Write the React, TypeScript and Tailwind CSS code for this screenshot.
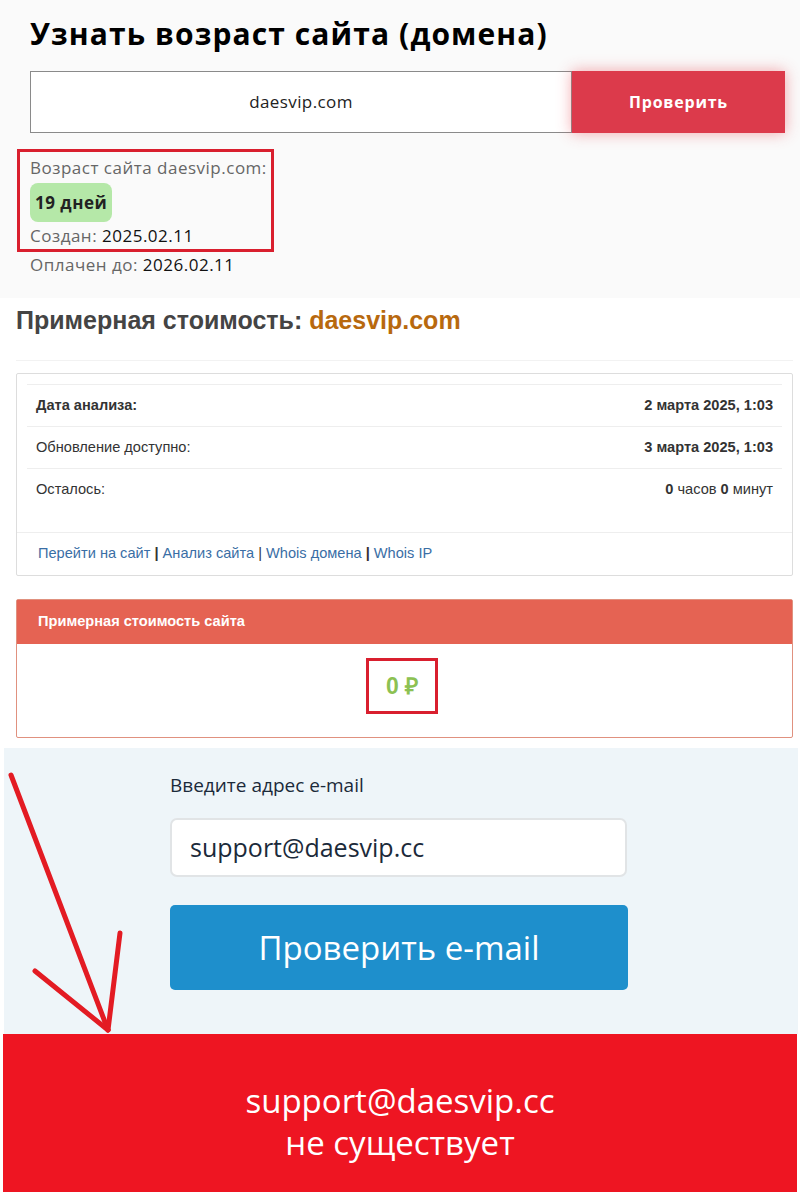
import React from "react";

const AgeSection = () => (
    <section className="bg-[#fafafa] h-[298px] pt-[14px] pl-[30px] pr-[15px] font-['Open_Sans',sans-serif]">
        <h1 className="text-[30px] leading-[40px] font-bold text-black tracking-[1.1px]">
            Узнать возраст сайта (домена)
        </h1>
        <div className="flex mt-[17px] h-[62px]">
            <div className="flex-1 bg-white border border-[#8a8a8a] flex items-center justify-center text-[17px] tracking-[0.4px] text-[#222]">
                daesvip.com
            </div>
            <button className="w-[213px] bg-[#dc3a4b] text-white font-bold text-[16px] tracking-[0.8px] shadow-[0_0_14px_rgba(230,60,70,0.45)]">
                Проверить
            </button>
        </div>
        <div className="relative mt-[16px] text-[17px] tracking-[0.5px] text-[#666] leading-[22px]">
            <div className="absolute left-[-13px] top-[0px] w-[257px] h-[103px] border-[3px] border-[#d91f2e] pointer-events-none" />
            <div className="pt-[8px]">Возраст сайта daesvip.com:</div>
            <div className="mt-[4px] inline-flex items-center h-[39px] px-[5px] rounded-[8px] bg-[#b5e8a8] text-[#222] font-bold">
                19 дней
            </div>
            <div className="mt-[3px]">
                Создан: <span className="text-[#111]">2025.02.11</span>
            </div>
            <div className="mt-[7px]">
                Оплачен до: <span className="text-[#111]">2026.02.11</span>
            </div>
        </div>
    </section>
);

const rows = [
    { label: "Дата анализа:", value: <b>2 марта 2025, 1:03</b>, bold: true },
    { label: "Обновление доступно:", value: <b>3 марта 2025, 1:03</b>, bold: false },
    {
        label: "Осталось:",
        value: (
            <>
                <b>0</b> часов <b>0</b> минут
            </>
        ),
        bold: false,
    },
];

const CostSection = () => (
    <section className="bg-white h-[450px] pl-[16px] pr-[7px] pt-[5px] font-['Liberation_Sans',Arial,sans-serif]">
        <h2 className="text-[25px] leading-[34px] font-bold text-[#444]">
            Примерная стоимость: <span className="text-[#b8690e]">daesvip.com</span>
        </h2>
        <div className="mt-[23px] border-t border-[#f2f2f2]" />
        <div className="mt-[12px] border border-[#ddd] rounded-[2px] h-[203px] flex flex-col">
            <div className="mx-[10px] mt-[10px] border-t border-[#eee]">
                {rows.map((r) => (
                    <div
                        key={r.label}
                        className="flex justify-between items-center h-[42px] px-[9px] border-b border-[#eee] last:border-b-0 text-[14.6px] text-[#333]"
                    >
                        <span className={r.bold ? "font-bold" : ""}>{r.label}</span>
                        <span>{r.value}</span>
                    </div>
                ))}
            </div>
            <div className="mt-auto border-t border-[#eee] h-[43px] flex items-center px-[21px] text-[14.6px] text-[#333]">
                <span className="text-[#3a6ea5]">Перейти на сайт</span>&nbsp;<b>|</b>&nbsp;
                <span className="text-[#3a6ea5]">Анализ сайта</span>&nbsp;|&nbsp;
                <span className="text-[#3a6ea5]">Whois домена</span>&nbsp;<b>|</b>&nbsp;
                <span className="text-[#3a6ea5]">Whois IP</span>
            </div>
        </div>
        <div className="mt-[23px] border border-[#e0917f] rounded-[2px] h-[139px] flex flex-col">
            <div className="bg-[#e56353] h-[44px] flex items-center px-[21px] text-white text-[14.6px] font-bold">
                Примерная стоимость сайта
            </div>
            <div className="flex-1 flex justify-center pt-[14px] pr-[5px]">
                <div className="border-[3px] border-[#d91f2e] w-[72px] h-[56px] flex items-center justify-center text-[23px] font-bold text-[#8cc152]">
                    0 ₽
                </div>
            </div>
        </div>
    </section>
);

const EmailSection = () => (
    <section className="bg-[#eef5f9] h-[286px] ml-[4px] mr-[2px] pl-[166px] pt-[24px] font-['Open_Sans',sans-serif]">
        <div className="text-[19px] leading-[26px] text-[#1b2a3a]">Введите адрес e-mail</div>
        <div className="mt-[20px] w-[457px] h-[59px] bg-white border-2 border-[#e1e4e6] rounded-[7px] flex items-center px-[18px] text-[25px] text-[#1b2a3a]">
            support@daesvip.cc
        </div>
        <button className="mt-[28px] w-[458px] h-[85px] bg-[#1e8fcc] rounded-[5px] text-white text-[33px]">
            Проверить e-mail
        </button>
    </section>
);

const ResultSection = () => (
    <section className="bg-[#ee1522] h-[158px] mx-[3px] flex flex-col items-center justify-center pt-[18px] text-white text-[33px] leading-[42px] font-['Open_Sans',sans-serif]">
        <div>support@daesvip.cc</div>
        <div>не существует</div>
    </section>
);

export default function App() {
    return (
        <div className="relative w-[800px] h-[1192px] overflow-hidden bg-white">
            <AgeSection />
            <CostSection />
            <EmailSection />
            <ResultSection />
            <svg className="absolute left-0 top-0 pointer-events-none" width="800" height="1192">
                <g stroke="#e31b23" strokeWidth="5" strokeLinecap="round" fill="none">
                    <line x1="11" y1="775" x2="108" y2="1030" />
                    <line x1="35" y1="971" x2="108" y2="1030" />
                    <line x1="120" y1="933" x2="108" y2="1030" />
                </g>
            </svg>
        </div>
    );
}
